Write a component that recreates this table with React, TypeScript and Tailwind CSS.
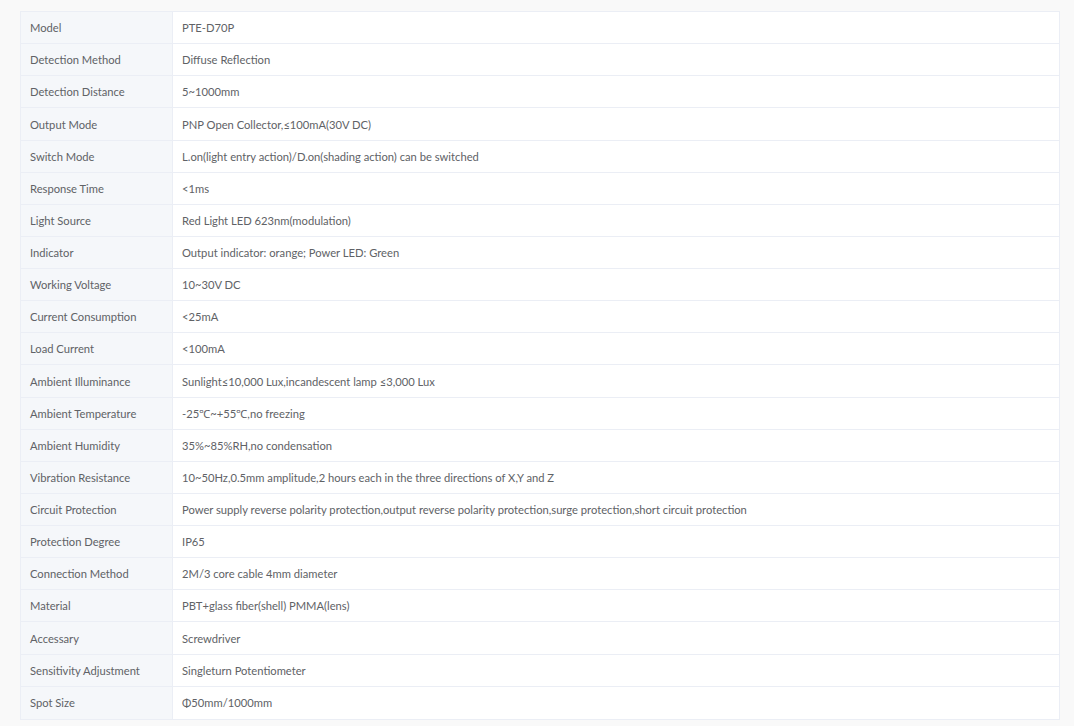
import React from "react";

const rows: [string, string][] = [
  ["Model", "PTE-D70P"],
  ["Detection Method", "Diffuse Reflection"],
  ["Detection Distance", "5~1000mm"],
  ["Output Mode", "PNP Open Collector,≤100mA(30V DC)"],
  ["Switch Mode", "L.on(light entry action)/D.on(shading action) can be switched"],
  ["Response Time", "<1ms"],
  ["Light Source", "Red Light LED 623nm(modulation)"],
  ["Indicator", "Output indicator: orange; Power LED: Green"],
  ["Working Voltage", "10~30V DC"],
  ["Current Consumption", "<25mA"],
  ["Load Current", "<100mA"],
  ["Ambient Illuminance", "Sunlight≤10,000 Lux,incandescent lamp ≤3,000 Lux"],
  ["Ambient Temperature", "-25℃~+55℃,no freezing"],
  ["Ambient Humidity", "35%~85%RH,no condensation"],
  ["Vibration Resistance", "10~50Hz,0.5mm amplitude,2 hours each in the three directions of X,Y and Z"],
  ["Circuit Protection", "Power supply reverse polarity protection,output reverse polarity protection,surge protection,short circuit protection"],
  ["Protection Degree", "IP65"],
  ["Connection Method", "2M/3 core cable 4mm diameter"],
  ["Material", "PBT+glass fiber(shell) PMMA(lens)"],
  ["Accessary", "Screwdriver"],
  ["Sensitivity Adjustment", "Singleturn Potentiometer"],
  ["Spot Size", "Φ50mm/1000mm"],
];

export default function App() {
  return (
    <div
      className="w-[1074px] h-[726px] bg-[#f9f9f9] pt-[11px] pl-[20px]"
      style={{ fontFamily: 'Lato, "Noto Sans", sans-serif' }}
    >
      <div className="w-[1040px] border border-[#ebeef5] bg-white flex flex-col">
        {rows.map(([k, v], i) => (
          <div
            key={k}
            className={`flex h-[32.14px] ${i < rows.length - 1 ? "border-b border-[#ebeef5]" : ""}`}
          >
            <div className="w-[152px] shrink-0 bg-[#f5f7fa] border-r border-[#ebeef5] flex items-center pl-[9px] pt-[2px] text-[11.2px] text-[#606266]">
              {k}
            </div>
            <div className="flex-1 flex items-center pl-[9px] pt-[2px] text-[11.2px] text-[#606266]">
              {v}
            </div>
          </div>
        ))}
      </div>
    </div>
  );
}
